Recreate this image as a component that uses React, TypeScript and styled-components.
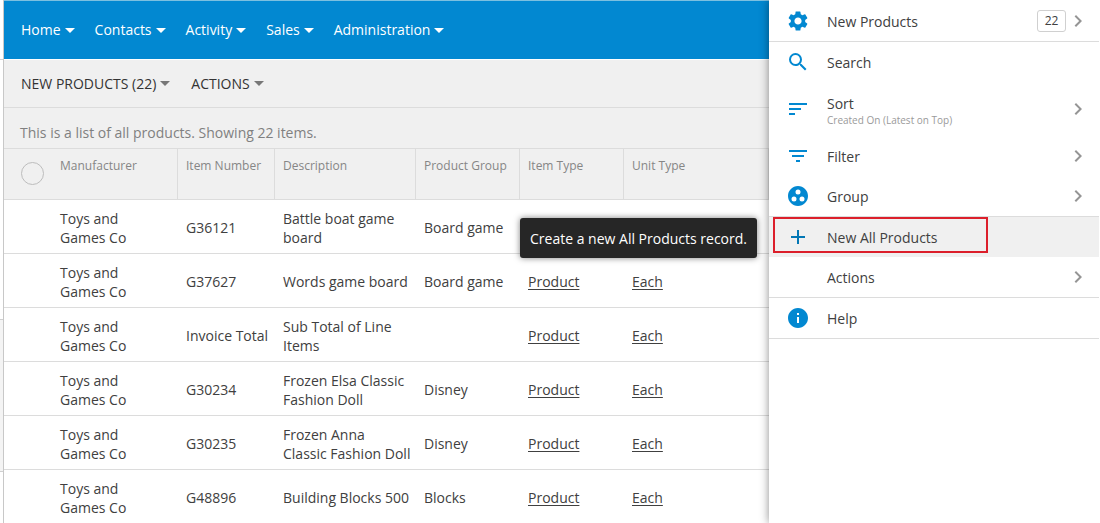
import React from "react";
import styled, { createGlobalStyle } from "styled-components";
import {
  MdAdd,
  MdChevronRight,
  MdFilterList,
  MdGroupWork,
  MdInfo,
  MdSearch,
  MdSettings,
  MdSort,
} from "react-icons/md";

const blue = "#0288d1";
const line = "#dcdcdc";

const GlobalStyle = createGlobalStyle`
  *, *::before, *::after { box-sizing: border-box; }
  body {
    margin: 0;
    background: #fff;
    color: #404040;
    font-family: "Open Sans", "Noto Sans", sans-serif;
    font-size: 14px;
    line-height: 20px;
  }
  button { font: inherit; color: inherit; background: none; border: 0; padding: 0; cursor: pointer; }
`;

const Shell = styled.div`
  display: flex;
  height: 100vh;
  overflow: hidden;
`;

const Edge = styled.div`
  flex: none;
  width: 4px;
  border-right: 1px solid #c8c8c8;
`;

const EdgeBlock = styled.div<{ $height: number; $shaded?: boolean }>`
  height: ${(p) => p.$height}px;
  border-bottom: 1px solid #d0d0d0;
  background: ${(p) => (p.$shaded ? "#f4f4f4" : "#fff")};
`;

const Main = styled.main`
  flex: 1;
  min-width: 0;
`;

const Nav = styled.nav`
  display: flex;
  gap: 20px;
  height: 59px;
  padding: 0 17px;
  background: ${blue};
  border-top: 1px solid #7cc0e0;
  color: #fff;
`;

const Toolbar = styled.div`
  display: flex;
  gap: 21px;
  height: 49px;
  padding: 0 17px;
  background: #f0f0f0;
  border-top: 1px solid #fff;
  border-bottom: 1px solid ${line};
  color: #333;
`;

const MenuButton = styled.button`
  display: flex;
  align-items: center;
  gap: 4px;
  white-space: nowrap;
`;

const Caret = styled.span<{ $color: string }>`
  border: 5px solid transparent;
  border-top-color: ${(p) => p.$color};
  border-bottom-width: 0;
`;

const Summary = styled.p`
  margin: 0;
  height: 41px;
  padding: 15px 16px 0;
  background: #f0f0f0;
  border-bottom: 1px solid ${line};
  color: #808080;
`;

const Grid = styled.table`
  width: 100%;
  table-layout: fixed;
  border-collapse: separate;
  border-spacing: 0;
`;

const Col = styled.col<{ $width?: number }>`
  width: ${(p) => (p.$width ? `${p.$width}px` : "auto")};
`;

const HeadCell = styled.th<{ $plain?: boolean }>`
  height: 51px;
  padding: 7px 8px 0;
  background: #f0f0f0;
  border-bottom: 1px solid ${line};
  border-right: ${(p) => (p.$plain ? "0" : `1px solid ${line}`)};
  color: #868686;
  font-size: 12px;
  font-weight: 400;
  text-align: left;
  vertical-align: top;
  white-space: nowrap;
`;

const SelectCell = styled(HeadCell)`
  padding: 13px 0 0 17px;
  line-height: 0;
`;

const SelectAll = styled.input`
  appearance: none;
  width: 23px;
  height: 23px;
  margin: 0;
  border: 1px solid #bdbdbd;
  border-radius: 50%;
`;

const Cell = styled.td`
  height: 54px;
  padding: 2px 0 0 8px;
  border-bottom: 1px solid ${line};
  line-height: 19px;
  white-space: pre;
`;

const CellLink = styled.a`
  color: inherit;
  text-decoration: underline;
  text-underline-offset: 2px;
`;

const Panel = styled.aside`
  position: relative;
  flex: none;
  width: 331px;
  padding-right: 1px;
  background: #fff;
  box-shadow: 0 0 9px rgba(0, 0, 0, 0.45);
`;

const PanelGroup = styled.div`
  border-bottom: 1px solid ${line};
`;

const PanelItem = styled.div<{ $active?: boolean }>`
  position: relative;
  background: ${(p) => (p.$active ? "#f0f0f0" : "transparent")};
  border-top: ${(p) => (p.$active ? `1px solid ${line}` : "0")};
`;

const PanelButton = styled.button<{ $height: number }>`
  display: flex;
  align-items: center;
  width: 100%;
  height: ${(p) => p.$height}px;
  padding: 0 9px 0 17px;
  text-align: left;
`;

const IconSlot = styled.span<{ $active?: boolean }>`
  display: flex;
  flex: none;
  width: 24px;
  height: 24px;
  margin-right: 17px;
  color: ${(p) => (p.$active ? "#0277b5" : blue)};
`;

const Label = styled.span`
  flex: 1;
  padding-top: 2px;
`;

const Note = styled.span`
  display: block;
  color: #9a9a9a;
  font-size: 10px;
  line-height: 12px;
`;

const Count = styled.span`
  width: 29px;
  height: 22px;
  border: 1px solid #d0d0d0;
  border-radius: 3px;
  font-size: 12px;
  text-align: center;
`;

const Arrow = styled(MdChevronRight)`
  flex: none;
  color: #959595;
`;

const Highlight = styled.span`
  position: absolute;
  top: 0;
  left: 4px;
  width: 215px;
  height: 36px;
  border: 2px solid #dc1f2b;
  pointer-events: none;
`;

const Tooltip = styled.span`
  position: absolute;
  top: 1px;
  right: 100%;
  margin-right: 12px;
  padding: 11px 10px 9px;
  border-radius: 3px;
  background: #262626;
  box-shadow: 0 0 6px rgba(0, 0, 0, 0.5);
  color: #fff;
  white-space: nowrap;
`;

const menus = ["Home", "Contacts", "Activity", "Sales", "Administration"];
const headings = ["Manufacturer", "Item Number", "Description", "Product Group", "Item Type", "Unit Type"];
const products = [
  ["G36121", "Battle boat game\nboard", "Board game", "", ""],
  ["G37627", "Words game board", "Board game", "Product", "Each"],
  ["Invoice Total", "Sub Total of Line\nItems", "", "Product", "Each"],
  ["G30234", "Frozen Elsa Classic\nFashion Doll", "Disney", "Product", "Each"],
  ["G30235", "Frozen Anna\nClassic Fashion Doll", "Disney", "Product", "Each"],
  ["G48896", "Building Blocks 500", "Blocks", "Product", "Each"],
];

interface ActionProps {
  icon?: React.ReactNode;
  label: string;
  note?: string;
  count?: number;
  arrow?: boolean;
  height?: number;
  active?: boolean;
  tip?: string;
}

function Action({ icon, label, note, count, arrow, height = 40, active, tip }: ActionProps) {
  return (
    <PanelItem $active={active}>
      <PanelButton type="button" $height={height} aria-describedby={tip ? "action-tip" : undefined}>
        <IconSlot $active={active}>{icon}</IconSlot>
        <Label>
          {label}
          {note && <Note>{note}</Note>}
        </Label>
        {count !== undefined && <Count>{count}</Count>}
        {arrow && <Arrow size={24} />}
      </PanelButton>
      {active && <Highlight />}
      {tip && <Tooltip role="tooltip" id="action-tip">{tip}</Tooltip>}
    </PanelItem>
  );
}

export default function App() {
  return (
    <>
      <GlobalStyle />
      <Shell>
        <Edge>
          <EdgeBlock $height={60} />
          <EdgeBlock $height={260} />
          <EdgeBlock $height={152} $shaded />
        </Edge>
        <Main>
          <Nav>
            {menus.map((name) => (
              <MenuButton type="button" key={name}>
                {name}
                <Caret $color="#fff" />
              </MenuButton>
            ))}
          </Nav>
          <Toolbar>
            <MenuButton type="button">NEW PRODUCTS (22)<Caret $color="#777" /></MenuButton>
            <MenuButton type="button">ACTIONS<Caret $color="#777" /></MenuButton>
          </Toolbar>
          <Summary>This is a list of all products. Showing 22 items.</Summary>
          <Grid>
            <colgroup>
              <Col $width={48} />
              <Col $width={126} />
              <Col $width={97} />
              <Col $width={141} />
              <Col $width={104} />
              <Col $width={104} />
              <Col />
            </colgroup>
            <thead>
              <tr>
                <SelectCell $plain>
                  <SelectAll type="checkbox" aria-label="Select all products" />
                </SelectCell>
                {headings.map((heading) => (
                  <HeadCell key={heading}>{heading}</HeadCell>
                ))}
              </tr>
            </thead>
            <tbody>
              {products.map(([item, description, group, itemType, unitType]) => (
                <tr key={item}>
                  <Cell />
                  <Cell>{"Toys and\nGames Co"}</Cell>
                  <Cell>{item}</Cell>
                  <Cell>{description}</Cell>
                  <Cell>{group}</Cell>
                  <Cell>{itemType && <CellLink href="#product">{itemType}</CellLink>}</Cell>
                  <Cell>{unitType && <CellLink href="#unit">{unitType}</CellLink>}</Cell>
                </tr>
              ))}
            </tbody>
          </Grid>
        </Main>
        <Panel>
          <PanelGroup>
            <Action icon={<MdSettings size={24} />} label="New Products" count={22} arrow height={41} />
          </PanelGroup>
          <PanelGroup>
            <Action icon={<MdSearch size={24} />} label="Search" />
            <Action icon={<MdSort size={24} />} label="Sort" note="Created On (Latest on Top)" arrow height={54} />
            <Action icon={<MdFilterList size={24} />} label="Filter" arrow />
            <Action icon={<MdGroupWork size={24} />} label="Group" arrow />
            <Action icon={<MdAdd size={24} />} label="New All Products" active tip="Create a new All Products record." />
            <Action label="Actions" arrow />
          </PanelGroup>
          <PanelGroup>
            <Action icon={<MdInfo size={24} />} label="Help" />
          </PanelGroup>
        </Panel>
      </Shell>
    </>
  );
}
